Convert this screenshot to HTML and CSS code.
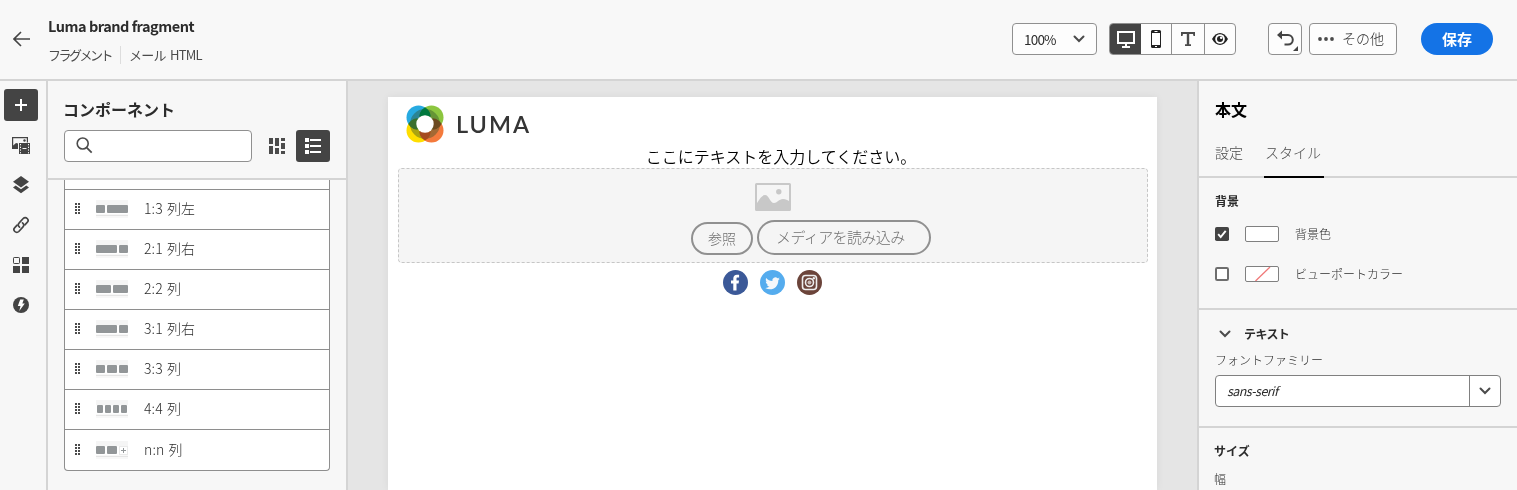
FILE: index.html
```html
<!DOCTYPE html>
<html lang="ja">
<head>
<meta charset="utf-8">
<title>Luma brand fragment</title>
<link rel="stylesheet" href="styles.css">
</head>
<body>
<div class="app">
  <header class="topbar">
    <svg class="back" width="18" height="16" viewBox="0 0 18 16"><path d="M17 8H1.5M8 1 1 8l7 7" fill="none" stroke="#444" stroke-width="1.6"/></svg>
    <div class="heading">
      <div class="title"><span class="t-title">Luma brand fragment</span></div>
      <div class="crumbs"><span class="t-frag">フラグメント</span><i class="divider"></i><span class="t-mail">メール HTML</span></div>
    </div>
    <div class="zoom-select"><span>100%</span><svg width="12" height="8" viewBox="0 0 12 8"><path d="M1.5 1.5 6 6l4.500-4.500" fill="none" stroke="#4b4b4b" stroke-width="2" stroke-linecap="round"/></svg></div>
    <div class="views">
      <div class="view active"><svg width="18" height="17" viewBox="0 0 18 17"><path d="M1 1h16v11H1zM9 12v4M5 16h8" fill="none" stroke="#fff" stroke-width="2"/></svg></div>
      <div class="view"><svg width="12" height="18" viewBox="0 0 12 18"><rect x="1" width="10" height="18" rx="1.500" fill="#222"/><path d="M2 3h8v12H2z" fill="#fff"/><path d="M4.500 1.500h3M5 16.500h2" stroke="#fff"/></svg></div>
      <div class="view wide"><svg width="14" height="14" viewBox="0 0 14 14"><path d="M0 0h14v4h-1.500l-.5-2H8.200v10.200H10V14H4v-1.800h1.800V2H2l-.5 2H0z" fill="#4b4b4b"/></svg></div>
      <div class="view"><svg width="16" height="12" viewBox="0 0 16 12"><path d="M0 6C2 2.200 5 0 8 0s6 2.200 8 6c-2 3.800-5 6-8 6S2 9.800 0 6z" fill="#222"/><circle cx="8" cy="6" r="4.800" fill="#fff"/><circle cx="8" cy="6" r="3" fill="#222"/><circle cx="9.200" cy="4.700" r="1.300" fill="#fff"/></svg></div>
    </div>
    <div class="undo"><svg width="32" height="30" viewBox="0 0 32 30"><path d="M10.500 11H19a4.800 4.800 0 0 1 0 9.600h-3.500" fill="none" stroke="#444" stroke-width="2"/><path d="M8 11l5-4.500v9z" fill="#444"/><path d="M29 22v5h-5z" fill="#444"/></svg></div>
    <div class="more"><svg width="16" height="4" viewBox="0 0 16 4"><circle cx="2" cy="2" r="1.900"/><circle cx="8" cy="2" r="1.900"/><circle cx="14" cy="2" r="1.900"/></svg><span>その他</span></div>
    <div class="save">保存</div>
  </header>
  <main class="workspace">
    <nav class="rail">
      <div class="rail-item selected"><svg width="14" height="14" viewBox="0 0 14 14"><path d="M7 1v12M1 7h12" stroke="#fff" stroke-width="2"/></svg></div>
      <div class="rail-item"><svg width="18" height="17" viewBox="0 0 18 17"><path d="M0 0h16v5.500h-1.200V1.200H1.200V8.500L4 6l2 .5V12H0z" fill="#444"/><circle cx="12.500" cy="3.500" r="1.200" fill="#444"/><rect x="7" y="6" width="11" height="11" fill="#444"/><path d="M8.500 7v9.500M16.500 7v9.500" stroke="#f7f7f7" stroke-dasharray="1.300 1.400"/><path d="M10.500 11.500h4" stroke="#f7f7f7"/></svg></div>
      <div class="rail-item"><svg width="18" height="18" viewBox="0 0 18 18"><path d="M9 0l8 5.700L9 11.400 1 5.700zM1 11.500 3.700 9.600 9 13.300l5.300-3.700L17 11.500 9 17.300z" fill="#444"/></svg></div>
      <div class="rail-item"><svg width="18" height="18" viewBox="0 0 18 18"><g fill="none" stroke="#444" stroke-width="1.700" stroke-linecap="round"><path d="M7.500 11.200C5.800 9.800 6 8 7.200 6.800l4-4.300c1.200-1.200 2.800-1.200 4 0s1.200 2.700 0 3.900l-2.300 2.400"/><path d="M10.500 6.800c1.700 1.400 1.500 3.200.3 4.400l-4 4.300c-1.200 1.200-2.800 1.200-4 0s-1.200-2.700 0-3.900l2.300-2.400"/></g></svg></div>
      <div class="rail-item"><svg width="16" height="16" viewBox="0 0 16 16"><rect x=".5" y=".5" width="6" height="6" rx=".7" fill="none" stroke="#444"/><path d="M9 0h7v7H9zM0 9h7v7H0zM9 9h7v7H9z" fill="#444"/></svg></div>
      <div class="rail-item"><svg width="16" height="16" viewBox="0 0 16 16"><circle cx="8" cy="8" r="8" fill="#444"/><path d="M7.200 2.500h3.600L9.300 6.500h2.500L6.300 14l1.200-5H4.800z" fill="#fff"/></svg></div>
    </nav>
    <aside class="components">
      <div class="components-head">
        <h2><span class="t-comp">コンポーネント</span></h2>
        <div class="search-row">
          <div class="search"><svg width="17" height="17" viewBox="0 0 17 17"><circle cx="6.700" cy="6.500" r="5.500" fill="none" stroke="#4b4b4b" stroke-width="1.600"/><path d="M10.700 10.700l5 5" stroke="#4b4b4b" stroke-width="1.800"/></svg></div>
          <svg class="grid-icon" width="16" height="16" viewBox="0 0 16 16"><path d="M0 0h4v6H0zM0 8h4v8H0zM6 0h4v8H6zM6 10h4v6H6zM12 0h4v3h-4zM12 5h4v6h-4zM12 13h4v3h-4z" fill="#4b4b4b"/></svg>
          <div class="list-btn"><svg width="17" height="16" viewBox="0 0 17 16"><path d="M0 0h4v4H0zM0 6h4v4H0zM0 12h4v4H0zM5 1h11v2H5zM5 7h11v2H5zM5 13h11v2H5z" fill="#fff"/></svg></div>
        </div>
      </div>
      <div class="list">
        <div class="row partial"></div>
        <div class="row"><i class="grip"></i><span class="thumb"><b style="flex-grow:9"></b><b style="flex-grow:21"></b></span><span class="label">1:3 列左</span></div>
        <div class="row"><i class="grip"></i><span class="thumb"><b style="flex-grow:21"></b><b style="flex-grow:9"></b></span><span class="label">2:1 列右</span></div>
        <div class="row"><i class="grip"></i><span class="thumb"><b></b><b></b></span><span class="label">2:2 列</span></div>
        <div class="row"><i class="grip"></i><span class="thumb"><b style="flex-grow:21"></b><b style="flex-grow:9"></b></span><span class="label">3:1 列右</span></div>
        <div class="row"><i class="grip"></i><span class="thumb"><b></b><b></b><b></b></span><span class="label">3:3 列</span></div>
        <div class="row"><i class="grip"></i><span class="thumb four"><b></b><b></b><b></b><b></b></span><span class="label">4:4 列</span></div>
        <div class="row last"><i class="grip"></i><span class="thumb"><b></b><b></b><b class="add"><svg width="9" height="9" viewBox="0 0 9 9"><rect x=".5" y=".5" width="8" height="8" fill="#fff" stroke="#d5d5d5" stroke-dasharray="1 1"/><path d="M4.500 2v5M2 4.500h5" stroke="#929698"/></svg></b></span><span class="label">n:n 列</span></div>
      </div>
    </aside>
    <section class="canvas">
      <div class="page">
        <div class="brand">
          <svg width="38" height="38" viewBox="0 0 38 38">
            <g class="petals"><circle cx="12.500" cy="12.500" r="12" fill="#27aae1"/><circle cx="25.500" cy="12.500" r="12" fill="#8cc63f"/><circle cx="12.500" cy="25.500" r="12" fill="#ffde00"/><circle cx="25.500" cy="25.500" r="12" fill="#f47a3c"/></g>
            <circle cx="19" cy="19" r="11.500" fill="none" stroke="#31502c" stroke-opacity=".42" stroke-width="7"/>
            <path d="M19 2.500c3.500 2 5.500 5 5.500 8.500h-11c0-3.500 2-6.500 5.500-8.500z" fill="#00783e"/><path d="M2.500 19c2-3.500 5-5.500 8.500-5.500v11c-3.500 0-6.500-2-8.500-5.500z" fill="#39702f"/><path d="M35.500 19c-2-3.500-5-5.500-8.500-5.500v11c3.500 0 6.500-2 8.500-5.500z" fill="#6c4a20"/><path d="M19 35.500c3.500-2 5.500-5 5.500-8.500h-11c0 3.500 2 6.500 5.500 8.500z" fill="#a64b1f"/>
            <circle cx="19" cy="19" r="8.700" fill="#fff"/>
          </svg>
          <span class="wordmark">LUMA</span>
        </div>
        <div class="copy"><span class="t-copy">ここにテキストを入力してください。</span></div>
        <div class="dropzone">
          <svg class="dash" width="750" height="95"><rect x=".5" y=".5" width="749" height="94" rx="3" fill="none" stroke="#c6c6c6" stroke-dasharray="3 2"/></svg>
          <svg width="36" height="28" viewBox="0 0 36 28"><rect x="1" y="1" width="34" height="26" rx=".5" fill="#f5f5f5" stroke="#c8c8c8" stroke-width="2"/><path d="M2 20c3-5 5.500-8 8-8 4 0 5 8 9 8 3 0 5-4 9-4 3 0 4 1 6 2v9H2z" fill="#c8c8c8"/><circle cx="23.800" cy="8.700" r="2.700" fill="#c8c8c8"/></svg>
          <div class="drop-actions"><div class="browse">参照</div><div class="import"><span>メディアを読み込み</span></div></div>
        </div>
        <div class="social">
          <svg width="25" height="25" viewBox="0 0 25 25"><circle cx="12.500" cy="12.500" r="12.500" fill="#3b5998"/><path d="M10.300 20.500v-7H8v-3h2.300V8.600c0-2.500 1.400-3.900 3.600-3.900h2.200v2.900h-1.500c-.9 0-1.100.5-1.100 1.300v1.600H16l-.4 3h-2.100v7z" fill="#fff"/></svg>
          <svg width="25" height="25" viewBox="0 0 25 25"><circle cx="12.500" cy="12.500" r="12.500" fill="#55acee"/><path d="M19.800 8.700c-.5.300-1.100.4-1.700.5.600-.4 1.100-1 1.300-1.600-.6.300-1.200.6-1.900.7a3 3 0 0 0-5.100 2.700c-2.500-.1-4.700-1.300-6.200-3.100-.8 1.400-.4 3.100.9 4-.5 0-.9-.1-1.300-.4 0 1.500 1 2.700 2.400 3-.4.100-.9.100-1.400 0 .4 1.200 1.500 2 2.800 2.100-1.300 1-2.800 1.400-4.400 1.300 6 3.600 13.300-.1 13.100-7.700.6-.4 1.100-.9 1.500-1.500z" fill="#f5f8fb"/></svg>
          <svg width="25" height="25" viewBox="0 0 25 25"><circle cx="12.500" cy="12.500" r="12.500" fill="#6b443a"/><g fill="none" stroke="#eee" stroke-width="1.600"><rect x="5.500" y="5.500" width="14" height="14" rx="3"/><circle cx="12.500" cy="12.500" r="4"/></g><circle cx="12.500" cy="12.500" r="2" fill="#c9bbb7"/><circle cx="16.800" cy="8.300" r="1.200" fill="#eee"/></svg>
        </div>
      </div>
    </section>
    <aside class="props">
      <div class="props-head">
        <h2>本文</h2>
        <div class="tabs"><div class="tab">設定</div><div class="tab current"><span class="t-style">スタイル</span></div></div>
      </div>
      <div class="background">
        <h3>背景</h3>
        <div class="color-row"><svg width="14" height="14" viewBox="0 0 14 14"><rect width="14" height="14" rx="1.800" fill="#444"/><path d="M3.200 7.200l2.500 2.900 5-6.300" fill="none" stroke="#fff" stroke-width="1.900"/></svg><i class="swatch"></i><span class="t-bg">背景色</span></div>
        <div class="color-row"><svg width="14" height="14" viewBox="0 0 14 14"><rect x="1" y="1" width="12" height="12" rx="1.200" fill="#fff" stroke="#6e6e6e" stroke-width="2"/></svg><i class="swatch"><svg width="32" height="14" viewBox="0 0 32 14"><path d="M9.500 14 24 0" stroke="#f07878" stroke-width="1.300"/></svg></i><span class="t-viewport">ビューポートカラー</span></div>
      </div>
      <div class="text-block">
        <div class="text-title"><svg width="12" height="8" viewBox="0 0 12 8"><path d="M1.500 1.500 6 6l4.500-4.500" fill="none" stroke="#4b4b4b" stroke-width="2" stroke-linecap="round"/></svg><span class="t-text">テキスト</span></div>
        <div class="field-label"><span class="t-family">フォントファミリー</span></div>
        <div class="combo"><div class="combo-value"><span>sans-serif</span></div><div class="combo-btn"><svg width="12" height="8" viewBox="0 0 12 8"><path d="M1.500 1.500 6 6l4.500-4.500" fill="none" stroke="#4b4b4b" stroke-width="2" stroke-linecap="round"/></svg></div></div>
      </div>
      <div class="size"><h3><span class="t-size">サイズ</span></h3><div class="width-label">幅</div></div>
    </aside>
  </main>
</div>
</body>
</html>
```
FILE: styles.css
```css
* { box-sizing: border-box; }
body { margin: 0; font-family: "Noto Sans CJK JP", sans-serif; color: #2c2c2c; background: #f7f7f7; overflow: hidden; }
svg { display: block; flex: none; }
h2, h3 { margin: 0; font-weight: 700; }
span { white-space: nowrap; }
.app { width: 1517px; height: 490px; display: flex; flex-direction: column; overflow: hidden; }

.topbar { height: 81px; flex: none; display: flex; align-items: flex-start; padding: 0 24px 0 13px; border-bottom: 2px solid #d4d4d4; background: #f8f8f8; }
.back { margin-top: 31px; }
.heading { margin: 15px auto 0 17px; }
.title { font-size: 14.500px; font-weight: 700; line-height: 22px; letter-spacing: -.480px; }
.crumbs { display: flex; align-items: center; height: 18px; margin-top: 9px; font-size: 13px; line-height: 18px; color: #4b4b4b; }
.t-frag { letter-spacing: -2.500px; width: 64px; }
.t-mail { letter-spacing: -.700px; word-spacing: 1.800px; }
.divider { width: 1px; height: 18px; background: #ddd; margin: 0 8px; }
.zoom-select { width: 85px; height: 32px; margin: 23px 12px 0 0; padding: 0 11px; border: 1px solid #909090; border-radius: 4px; background: #fdfdfd; display: flex; align-items: center; justify-content: space-between; font-size: 13.500px; letter-spacing: -.800px; }
.views { width: 127px; height: 32px; margin: 23px 32px 0 0; display: flex; border: 1px solid #909090; border-radius: 4px; background: #fdfdfd; overflow: hidden; }
.view { width: 31px; display: flex; align-items: center; justify-content: center; border-left: 1px solid #909090; }
.view:nth-child(2) { width: 30px; border-left: 0; }
.view.wide { width: 33px; }
.view.active { background: #444; border-left: 0; }
.undo { width: 34px; height: 32px; margin: 23px 7px 0 0; border: 1px solid #909090; border-radius: 4px; background: #fdfdfd; }
.more { width: 88px; height: 32px; margin: 23px 24px 0 0; padding-left: 8px; border: 1px solid #909090; border-radius: 4px; background: #fdfdfd; display: flex; align-items: center; gap: 8px; font-size: 14px; line-height: 28px; font-weight: 300; }
.more span { margin-top: -2px; }
.more svg { fill: #4b4b4b; }
.save { width: 72px; height: 32px; margin-top: 23px; border-radius: 16px; background: #1473e6; color: #fff; font-size: 15px; font-weight: 700; line-height: 31px; text-align: center; }

.workspace { flex: 1; display: flex; min-height: 0; }
.rail { width: 48px; flex: none; border-right: 2px solid #d4d4d4; padding: 8px 4px; display: flex; flex-direction: column; gap: 8px; }
.rail-item { width: 34px; height: 32px; display: flex; align-items: center; justify-content: center; border-radius: 3px; }
.selected { background: #444; }

.components { width: 300px; flex: none; border-right: 2px solid #d4d4d4; display: flex; flex-direction: column; }
.components-head { height: 99px; flex: none; padding: 16px 16px 0; border-bottom: 2px solid #d4d4d4; }
.components-head h2 { font-size: 16px; line-height: 24px; margin-left: -1px; }
.search-row { display: flex; align-items: center; margin-top: 9px; }
.search { width: 188px; height: 32px; border: 1px solid #909090; border-radius: 4px; background: #fff; padding: 6px 11px; }
.grid-icon { margin: 0 11px 0 17px; }
.list-btn { width: 34px; height: 32px; border-radius: 3px; background: #444; display: flex; align-items: center; justify-content: center; }
.list { width: 266px; margin-left: 16px; border: 1px solid #8e8e8e; border-top: 0; border-radius: 0 0 4px 4px; background: #fff; }
.row { height: 40px; display: flex; align-items: center; border-bottom: 1px solid #8e8e8e; padding: 0 0 2px 10px; }
.row.partial { height: 10px; }
.row.last { border-bottom: 0; padding-bottom: 1px; }
.grip { width: 5px; height: 11px; background: repeating-linear-gradient(to bottom, transparent 0 2px, #fff 2px 3px), linear-gradient(to right, #4b4b4b 2px, #fff 2px 3px, #4b4b4b 3px); }
.thumb { width: 32px; height: 18px; margin: 1px 16px 0; display: flex; gap: 2px; padding: 5px 0 5px; background: linear-gradient(#f5f5f5 0 5px, transparent 5px 14px, #f8f8f8 14px 15px, #e5e5e5 15px 16px, #f8f8f8 16px); }
.thumb b { flex: 1 1 0; height: 8px; border-radius: 1px; background: #929698; }
.thumb.four { padding-left: 1px; padding-right: 1px; }
.thumb .add { background: transparent; }
.label { font-size: 14px; font-weight: 300; line-height: 20px; letter-spacing: .100px; word-spacing: 1px; margin-top: -1px; }
.last .label { margin-top: -2px; }

.canvas { width: 849px; flex: none; padding: 16px 40px 0; background: #e5e5e5; }
.page { height: 393px; padding: 8px 10px 0; background: #fff; box-shadow: 0 0 8px rgba(0,0,0,.06); }
.brand { display: flex; align-items: center; gap: 12px; height: 38px; padding-left: 8px; }
.petals circle { mix-blend-mode: multiply; }
.wordmark { font-family: Lato, sans-serif; font-weight: 600; font-size: 23.500px; line-height: 36px; letter-spacing: 2px; color: #353535; margin-top: -1px; }
.copy { height: 25px; padding-left: 17px; text-align: center; font-size: 16px; line-height: 26px; font-weight: 350; color: #000; }
.dropzone { position: relative; width: 750px; height: 95px; padding-top: 15px; background: #f5f5f5; display: flex; flex-direction: column; align-items: center; border-radius: 3px; }
.dash { position: absolute; top: 0; left: 0; }
.drop-actions { display: flex; align-items: flex-end; gap: 4px; margin: 9px 0 0 293px; align-self: flex-start; color: #707070; font-weight: 300; }
.browse { width: 62px; height: 33px; border: 2px solid #909090; border-radius: 17px; text-align: center; font-size: 14px; line-height: 28px; }
.import { width: 174px; height: 35px; border: 2px solid #909090; border-radius: 18px; padding-left: 17px; font-size: 15px; line-height: 29px; letter-spacing: -.600px; }
.social { display: flex; justify-content: center; gap: 12px; padding-top: 7px; }

.props { width: 320px; flex: none; border-left: 2px solid #d4d4d4; }
.props-head { height: 97px; padding: 16px 16px 0; border-bottom: 2px solid #d4d4d4; color: #000; }
.props-head h2 { font-size: 16px; line-height: 24px; }
.tabs { display: flex; height: 57px; gap: 21px; font-size: 14px; line-height: 20px; font-weight: 300; color: #4b4b4b; }
.tab { padding-top: 21px; }
.tab.current { width: 60px; padding-left: 1px; border-bottom: 2px solid #000; position: relative; }
.background { height: 132px; padding: 14px 16px 0; border-bottom: 2px solid #d4d4d4; }
.background h3 { font-size: 12px; line-height: 18px; margin-bottom: 4px; }
.color-row { height: 40px; display: flex; align-items: center; font-size: 12px; font-weight: 300; }
.color-row span { margin-top: -2px; }
.swatch { width: 34px; height: 16px; margin: 0 16px; border: 1px solid #808080; border-radius: 2px; background: #fff; }
.text-block { height: 118px; padding: 15px 16px 0; border-bottom: 2px solid #d4d4d4; }
.text-title { display: flex; align-items: center; gap: 13px; padding-left: 4px; height: 18px; font-size: 12px; font-weight: 700; line-height: 18px; letter-spacing: -.600px; }
.field-label { margin-top: 8px; height: 18px; font-size: 12px; line-height: 18px; font-weight: 300; }
.combo { width: 286px; height: 32px; margin-top: 6px; border: 1px solid #808080; border-radius: 4px; background: #fff; display: flex; overflow: hidden; }
.combo-value { flex: 1; padding-left: 11px; font-size: 12.500px; line-height: 29px; font-style: italic; letter-spacing: -.550px; }
.combo-btn { width: 31px; border-left: 1px solid #808080; display: flex; align-items: center; justify-content: center; }
.size { padding: 13px 15px 0; }
.size h3 { font-size: 12px; line-height: 20px; }
.width-label { margin-top: 9px; font-size: 12px; line-height: 18px; font-weight: 300; }
```
